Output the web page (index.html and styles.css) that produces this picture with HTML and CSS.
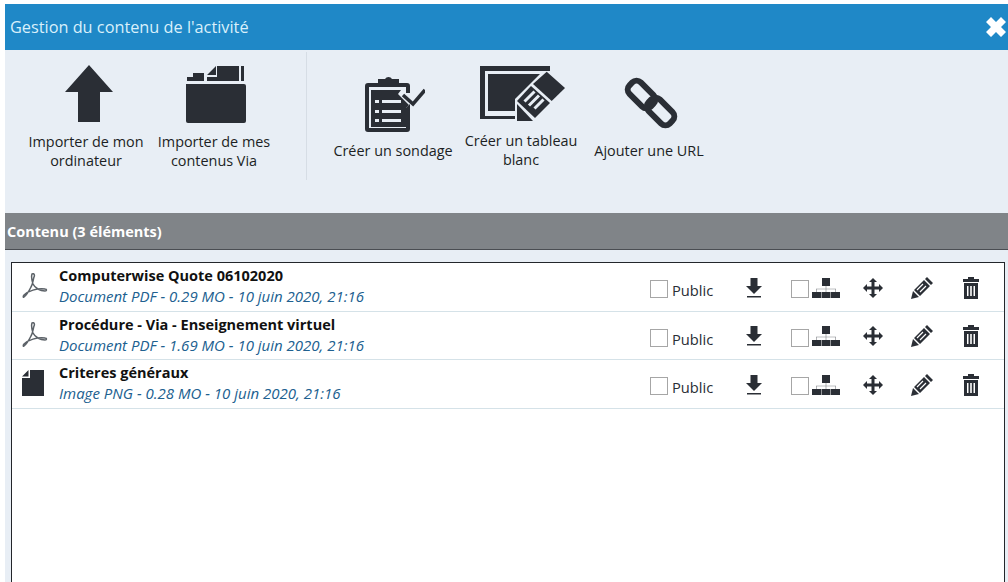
FILE: index.html
```html
<!DOCTYPE html>
<html lang="fr">

<head>
    <meta charset="UTF-8">
    <title>Gestion du contenu de l'activité</title>
    <link rel="stylesheet" href="styles.css">
</head>

<body>
    <svg class="defs" width="0" height="0">
        <symbol id="pdf" viewBox="0 0 26 26">
            <path d="M10 1c2-1 3 1 2 3-1 3-1 7-3 10-2 4-4 8-7 10-1 1-1-1 0-2 4-4 13-7 21-6 2 0 2 2 0 2-5 0-10-3-12-7-1-3-2-7-1-10z" fill="none" stroke="#5c6268" stroke-width="1.500" />
        </symbol>
        <symbol id="download" viewBox="0 0 16 20">
            <path d="M4.500 0h7v8H16l-8 8-8-8h4.500z" />
            <path d="M1 18h14v1.500H1z" />
        </symbol>
        <symbol id="tree" viewBox="0 0 28 20">
            <path d="M10 0h8v8h-8zM0 14h9v6H0zM9.500 14h9v6h-9zM19 14h9v6h-9z" />
            <path d="M13.700 8h.6v2.700H24V14h-.6v-2.700h-9.100V14h-.6v-2.700H4.600V14H4v-3.300h9.700z" opacity=".6" />
        </symbol>
        <symbol id="move" viewBox="0 0 20 20">
            <path d="M10 0l4 4h-2.500v4.500H16V6l4 4-4 4v-2.500h-4.500V16H14l-4 4-4-4h2.500v-4.500H4V14l-4-4 4-4v2.500h4.500V4H6z" />
        </symbol>
        <symbol id="pencil" viewBox="0 0 22 22">
            <path d="M16 0l6 6-2 2-6-6zM13 3l6 6-10 10-6-6zM2 14l6 6-8 2z" />
            <path d="M12 7L6 13M15 9l-6 6" stroke="#fff" stroke-width="1.200" />
        </symbol>
        <symbol id="trash" viewBox="0 0 16 22">
            <path d="M5 0h6v2h5v3H0V2h5zM1 6h14v16H1zM4 9v10h1.500V9zM7.200 9v10h1.600V9zM10.500 9v10H12V9z" fill-rule="evenodd" />
        </symbol>
    </svg>

    <div class="dialog">
        <div class="title-bar">
            <span>Gestion du contenu de l'activité</span>
            <svg class="close" viewBox="0 0 20 20">
                <path d="M5 0l5 5 5-5 5 5-5 5 5 5-5 5-5-5-5 5-5-5 5-5-5-5z" fill="#fff" />
            </svg>
        </div>

        <div class="toolbar">
            <div class="tool">
                <svg class="ico-up" viewBox="0 0 48 58">
                    <path d="M24 0l24 27H35v30H13V27H0z" />
                </svg>
                <span>Importer de mon ordinateur</span>
            </div>
            <div class="tool">
                <svg class="ico-folder" viewBox="0 0 62 58">
                    <path d="M1 19h58a2 2 0 0 1 2 2v35a2 2 0 0 1-2 2H3a2 2 0 0 1-2-2z" />
                    <path d="M2 16v-4h6V8h11v8zM22 16v-4h10V1h22v15zM22 10l9-9v9zM56 1h3v15h-3z" />
                </svg>
                <span>Importer de mes contenus Via</span>
            </div>
            <div class="divider"></div>
            <div class="tool">
                <svg class="ico-survey" viewBox="0 0 60 57">
                    <path d="M3 8h10v4H4v41h37V33l4-4v25a3 3 0 0 1-3 3H3a3 3 0 0 1-3-3V11a3 3 0 0 1 3-3zM33 8h9a3 3 0 0 1 3 3v7h-4v-6h-8z" />
                    <path d="M13 4h7a4 4 0 0 1 7 0h7v8H13z" />
                    <path d="M6 15h30l-3 4 11 11-3 3v19H6z" />
                    <path d="M10 25h4v3h-4zM17 25h19v3H17zM10 35h4v3h-4zM17 35h19v3H17zM10 44h4v3h-4zM17 44h19v3H17z" fill="#e8eef5" />
                    <path d="M38 20l10 9 12-14" fill="none" stroke="#2a2e35" stroke-width="3.500" />
                </svg>
                <span>Créer un sondage</span>
            </div>
            <div class="tool">
                <svg class="ico-board" viewBox="0 0 85 56">
                    <path d="M0 0h70v5H5v45h30v3H0z" />
                    <path d="M8 8h52L35 33v12H8z" />
                    <path d="M66.700 5.700L85 22 71.700 35 53 18z" />
                    <path d="M51 20l19 17-15 15-18-17z" />
                    <path d="M54.500 25.500l-10 10M59 29.500l-10 10M63.500 33.500l-9 9" stroke="#e8eef5" stroke-width="3" />
                    <path d="M37 38l16 17H37z" />
                </svg>
                <span>Créer un tableau blanc</span>
            </div>
            <div class="tool">
                <svg class="ico-link" viewBox="0 0 60 58">
                    <rect x="5.500" y="12.500" width="30" height="16" rx="6" transform="rotate(45 20.500 20.500)" fill="none" stroke="#2a2e35" stroke-width="6" />
                    <rect x="24.500" y="29.500" width="30" height="16" rx="6" transform="rotate(45 39.500 37.500)" fill="none" stroke="#2a2e35" stroke-width="6" />
                </svg>
                <span>Ajouter une URL</span>
            </div>
        </div>

        <div class="section-head">Contenu (3 éléments)</div>

        <div class="content">
            <div class="list">
                <div class="row">
                    <svg class="file-ico"><use href="#pdf" /></svg>
                    <div class="info">
                        <div class="name">Computerwise Quote 06102020</div>
                        <div class="meta">Document PDF - 0.29 MO - 10 juin 2020, 21:16</div>
                    </div>
                    <div class="actions">
                        <span class="check"></span><span class="public">Public</span>
                        <svg class="a-down"><use href="#download" /></svg>
                        <span class="check check-tree"></span>
                        <svg class="a-tree"><use href="#tree" /></svg>
                        <svg class="a-move"><use href="#move" /></svg>
                        <svg class="a-pencil"><use href="#pencil" /></svg>
                        <svg class="a-trash"><use href="#trash" /></svg>
                    </div>
                </div>
                <div class="row">
                    <svg class="file-ico"><use href="#pdf" /></svg>
                    <div class="info">
                        <div class="name">Procédure - Via - Enseignement virtuel</div>
                        <div class="meta">Document PDF - 1.69 MO - 10 juin 2020, 21:16</div>
                    </div>
                    <div class="actions">
                        <span class="check"></span><span class="public">Public</span>
                        <svg class="a-down"><use href="#download" /></svg>
                        <span class="check check-tree"></span>
                        <svg class="a-tree"><use href="#tree" /></svg>
                        <svg class="a-move"><use href="#move" /></svg>
                        <svg class="a-pencil"><use href="#pencil" /></svg>
                        <svg class="a-trash"><use href="#trash" /></svg>
                    </div>
                </div>
                <div class="row">
                    <svg class="file-ico" viewBox="0 0 26 26"><path d="M8 0h14v26H0V8h8zM0 6.500L6.500 0v6.500z" fill="#2a2e35" /></svg>
                    <div class="info">
                        <div class="name">Criteres généraux</div>
                        <div class="meta">Image PNG - 0.28 MO - 10 juin 2020, 21:16</div>
                    </div>
                    <div class="actions">
                        <span class="check"></span><span class="public">Public</span>
                        <svg class="a-down"><use href="#download" /></svg>
                        <span class="check check-tree"></span>
                        <svg class="a-tree"><use href="#tree" /></svg>
                        <svg class="a-move"><use href="#move" /></svg>
                        <svg class="a-pencil"><use href="#pencil" /></svg>
                        <svg class="a-trash"><use href="#trash" /></svg>
                    </div>
                </div>
            </div>
        </div>
    </div>
</body>

</html>
```

FILE: styles.css
```css
* {
    margin: 0;
    padding: 0;
    box-sizing: border-box;
}

html,
body {
    height: 582px;
    overflow: hidden;
    background: #fff;
}

body {
    padding: 4px 0 0 5px;
    font-family: "Open Sans", "Noto Sans", sans-serif;
    font-size: 14.400px;
    color: #1c1f24;
}

.defs {
    display: block;
    height: 0;
}

.dialog {
    display: flex;
    flex-direction: column;
    height: 578px;
    background: #e8eef5;
}

.title-bar {
    display: flex;
    align-items: center;
    justify-content: space-between;
    height: 46px;
    padding-left: 5px;
    background: #1f88c7;
    color: #d9f0fb;
    font-size: 16.300px;
}

.close {
    width: 20px;
    height: 20px;
    margin-right: 2px;
}

.toolbar {
    display: flex;
    align-items: center;
    height: 163px;
    padding: 0 0 29px 17px;
}

.tool {
    display: flex;
    flex-direction: column;
    align-items: center;
    width: 128px;
    text-align: center;
    line-height: 19px;
    fill: #2a2e35;
}

.tool span {
    display: block;
    width: 124px;
}

.tool svg {
    display: block;
    margin-bottom: 9px;
}

.ico-up {
    width: 48px;
    height: 58px;
    margin-left: 6px;
}

.ico-folder {
    width: 62px;
    height: 58px;
    margin-left: 3px;
}

.ico-survey {
    width: 60px;
    height: 57px;
    margin-left: 4px;
}

.ico-board {
    width: 85px;
    height: 56px;
    margin-left: 2px;
}

.ico-link {
    width: 60px;
    height: 58px;
    margin-left: 3px;
}

.divider {
    align-self: flex-start;
    width: 1px;
    height: 128px;
    margin: 2px 22px 0 28px;
    background: #d6dde5;
}

.section-head {
    height: 37px;
    padding: 0 2px;
    background: #808488;
    border-bottom: 1px solid #4a4d52;
    color: #fff;
    font-size: 14.500px;
    font-weight: 700;
    line-height: 37px;
}

.content {
    flex: 1;
    padding: 12px 3px 0 6px;
}

.list {
    height: 100%;
    background: #fff;
    border: 1px solid #23262b;
    border-bottom: 0;
}

.row {
    display: flex;
    align-items: center;
    height: 48.500px;
    padding: 0 0 1px 10px;
    border-bottom: 1px solid #d5e2e8;
}

.file-ico {
    flex: none;
    width: 26px;
    height: 26px;
    margin-right: 11px;
}

.info {
    flex: 1;
    min-width: 0;
}

.name {
    font-size: 14.500px;
    font-weight: 700;
    color: #111;
    line-height: 21px;
}

.meta {
    font-size: 15px;
    font-style: italic;
    color: #20608f;
    line-height: 21px;
}

.actions {
    display: flex;
    align-items: center;
    flex: none;
    width: 354px;
    padding-top: 3px;
    fill: #2a2e35;
}

.actions svg {
    display: block;
}

.check {
    width: 18px;
    height: 18px;
    margin-top: 3px;
    background: #fff;
    border: 1px solid #a6a6a6;
}

.public {
    width: 74px;
    margin: 5px 0 0 4px;
    font-size: 14.700px;
    color: #2a2e35;
}

.a-down {
    width: 16px;
    height: 20px;
}

.check-tree {
    margin-left: 29px;
}

.a-tree {
    width: 28px;
    height: 20px;
    margin-left: 3px;
}

.a-move {
    width: 20px;
    height: 20px;
    margin-left: 23px;
}

.a-pencil {
    width: 22px;
    height: 22px;
    margin-left: 28px;
}

.a-trash {
    width: 16px;
    height: 22px;
    margin-left: 30px;
}
```
